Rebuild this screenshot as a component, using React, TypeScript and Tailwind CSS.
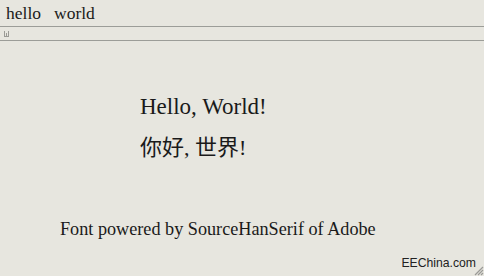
const serif = "font-['Liberation_Serif','Noto_Sans_CJK_SC',serif]";

export default function App() {
  return (
    <div className="relative flex h-[276px] w-[484px] flex-col overflow-hidden bg-[#e7e6df] text-[#1a1a1a]">
      {/* menu bar */}
      <div className={`flex h-[26px] items-center gap-[13px] px-[6px] text-[17.5px] ${serif}`}>
        <span>hello</span>
        <span>world</span>
      </div>
      <div className="h-px bg-[#9c9d98]" />
      {/* toolbar */}
      <div className="flex h-[13px] items-center px-[3px]">
        <svg width="7" height="6" viewBox="0 0 7 6">
          <path d="M1.5 0 V5.5 M5.5 0 V5.5 M1 5.5 H6 M3.5 2 V5.5" stroke="#9a9a95" strokeWidth="1" fill="none" />
        </svg>
      </div>
      <div className="h-px bg-[#9c9d98]" />

      {/* content */}
      <div className={`flex flex-1 flex-col ${serif}`}>
        <div className="ml-[140px] mt-[53px] text-[23px] leading-[26px]">Hello, World!</div>
        <div className="ml-[140px] mt-[15px] text-[22px] leading-[26px]">你好, 世界!</div>
        <div className="ml-[60px] mt-[57px] text-[18.2px] leading-[22px]">
          Font powered by SourceHanSerif of Adobe
        </div>
      </div>

      <div className="absolute bottom-[4px] right-[8px] font-['Liberation_Sans',sans-serif] text-[12.2px] text-[#222]">
        EEChina.com
      </div>
      <svg className="absolute bottom-0 right-0" width="12" height="12" viewBox="0 0 12 12">
        <path d="M11 3 L3 11 M11 6 L6 11 M11 9 L9 11" stroke="#9a9a96" strokeWidth="1.2" />
      </svg>
    </div>
  );
}
